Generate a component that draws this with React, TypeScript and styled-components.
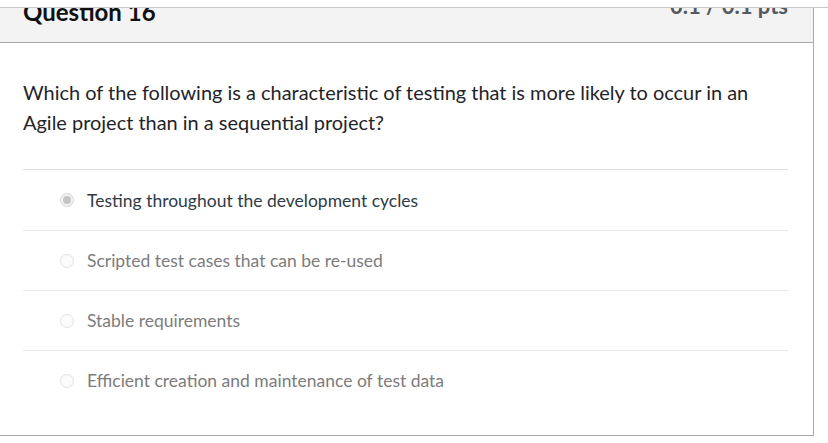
import styled, { createGlobalStyle } from "styled-components";

const GlobalStyle = createGlobalStyle`
  html, body {
    margin: 0;
    padding: 0;
    background: #ffffff;
    font-family: Lato, "Liberation Sans", sans-serif;
    overflow: hidden;
  }
`;

const Viewport = styled.div`
  margin-top: 7px;
  border-top: 1px solid #c8c8c8;
  height: 435px;
  overflow: hidden;
`;

const Card = styled.div`
  margin-top: -20px;
  width: 813px;
  border-right: 1px solid #aaaaaa;
  border-bottom: 1px solid #aaaaaa;
  background: #ffffff;
`;

const Header = styled.div`
  display: flex;
  justify-content: space-between;
  align-items: flex-start;
  height: 54px;
  padding: 0 25px 0 23px;
  background: #f3f3f3;
  border-bottom: 1px solid #aaaaaa;
`;

const Title = styled.h2`
  margin: 0;
  font-size: 24px;
  line-height: 47px;
  font-weight: 700;
  color: #111111;
`;

const Points = styled.div`
  font-size: 22px;
  line-height: 35px;
  font-weight: 700;
  color: #555a60;
`;

const Body = styled.div`
  padding: 34px 25px 25px 23px;
`;

const QuestionText = styled.p`
  margin: 0 0 32px;
  font-size: 19.95px;
  line-height: 30px;
  color: #1f2429;
`;

const AnswerList = styled.div`
  border-top: 1px solid #dddddd;
`;

const AnswerRow = styled.label`
  box-sizing: border-box;
  display: flex;
  align-items: center;
  height: 60px;
  padding-left: 37px;
  gap: 13px;
  & + & {
    border-top: 1px solid #e8e8e8;
  }
`;

const Radio = styled.span<{ $checked?: boolean }>`
  position: relative;
  flex: none;
  width: 12px;
  height: 12px;
  border-radius: 50%;
  border: 1px solid ${(p) => (p.$checked ? "#d8d8d8" : "#e3e3e3")};
  background: ${(p) => (p.$checked ? "#f2f2f2" : "#fbfbfb")};
  &::after {
    content: "";
    display: ${(p) => (p.$checked ? "block" : "none")};
    position: absolute;
    left: 2px;
    top: 2px;
    width: 8px;
    height: 8px;
    border-radius: 50%;
    background: #c4c4c4;
  }
`;

const AnswerText = styled.span<{ $checked?: boolean }>`
  font-size: 17.5px;
  color: ${(p) => (p.$checked ? "#2d3b45" : "#7c7c7c")};
`;

const answers = [
  { text: "Testing throughout the development cycles", checked: true },
  { text: "Scripted test cases that can be re-used", checked: false },
  { text: "Stable requirements", checked: false },
  { text: "Efficient creation and maintenance of test data", checked: false },
];

export default function App() {
  return (
    <>
      <GlobalStyle />
      <Viewport>
        <Card>
          <Header>
            <Title>Question 16</Title>
            <Points>0.1 / 0.1 pts</Points>
          </Header>
          <Body>
            <QuestionText>
              Which of the following is a characteristic of testing that is more
              likely to occur in an Agile project than in a sequential project?
            </QuestionText>
            <AnswerList>
              {answers.map((a) => (
                <AnswerRow key={a.text}>
                  <Radio $checked={a.checked} />
                  <AnswerText $checked={a.checked}>{a.text}</AnswerText>
                </AnswerRow>
              ))}
            </AnswerList>
          </Body>
        </Card>
      </Viewport>
    </>
  );
}
